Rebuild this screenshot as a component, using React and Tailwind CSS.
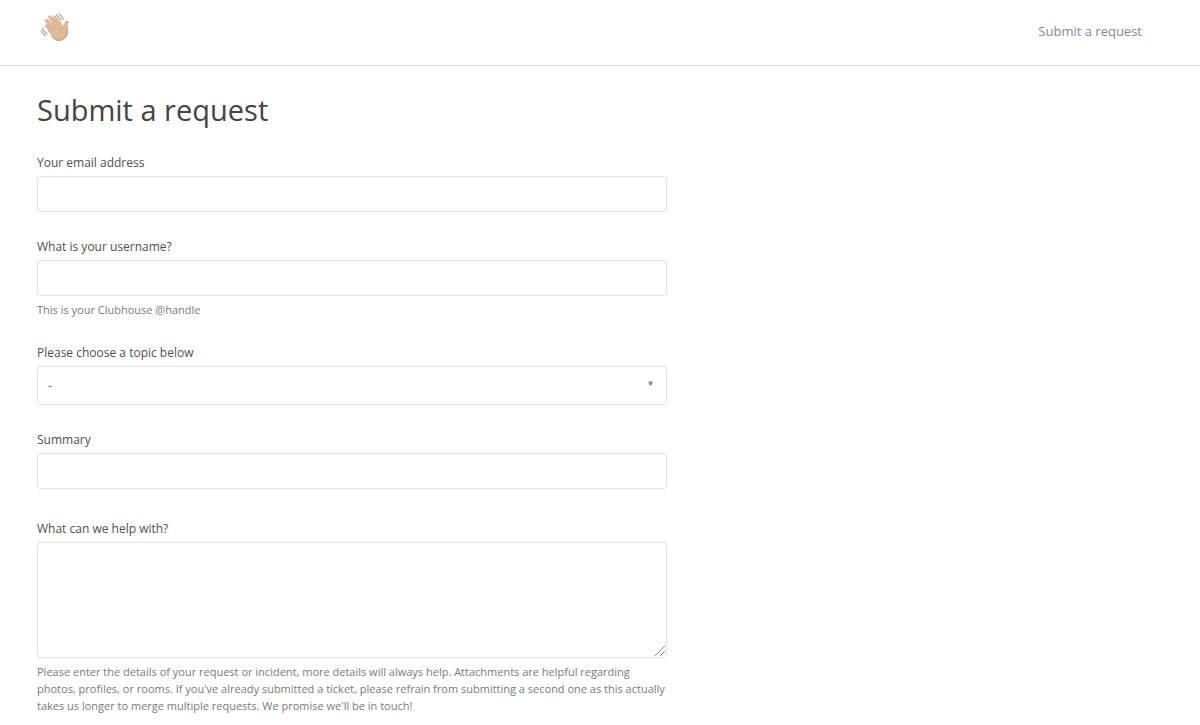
import { useState } from "react";

const hintClass = "mt-[5px] text-[11px] leading-[17px] text-[#7a7a7a]";
const inputClass =
  "block w-full h-9 px-2.5 rounded-[3px] border border-[#e3e3e3] bg-white text-[13px] text-[#555] outline-none focus:border-[#8aa4b8]";

function WavingHand() {
  return (
    <svg className="w-8 h-8" viewBox="0 0 32 32" aria-hidden="true">
      {/* Palm, thumb and fingers */}
      <g stroke="#e0bb99" strokeLinecap="round" fill="none">
        <path d="M7.6 13.8 L15 22" strokeWidth="3.6" />
        <path d="M7.6 8.8 L17 19" strokeWidth="3.8" />
        <path d="M11 5.2 L20 16" strokeWidth="3.8" />
        <path d="M15.6 5 L22 13" strokeWidth="3.4" />
        <path d="M27.4 11 L26.6 18" strokeWidth="3.4" />
      </g>
      <path
        d="M10 17 L13 11 L20 9.5 L23.4 14.6 Q25 12.6 25.6 11 L29 11 Q28.6 14 29 18 Q29.3 22.5 26.4 25.6 Q22.8 29.2 18.4 28.6 Q15.4 27.6 13.2 24.6 L8.6 18.4 Z"
        fill="#e0bb99"
      />
      <g stroke="#cda685" strokeWidth="0.7" strokeLinecap="round" fill="none">
        <path d="M9.6 8.4 L16 15.4" />
        <path d="M13.6 5.8 L19 12.2" />
        <path d="M8.6 12.6 L13.4 17.6" />
        <path d="M23.4 14.8 Q20.4 17.4 21.6 21" />
      </g>
      <path
        d="M13 24.4 Q17.4 30 23 27.6 Q28.6 24.8 28.6 17"
        stroke="#c59f80"
        strokeWidth="1.2"
        strokeLinecap="round"
        fill="none"
      />
      {/* Motion marks */}
      <g stroke="#a9ada9" strokeWidth="1.3" strokeLinecap="round" fill="none">
        <path d="M17.6 3 Q20.2 5 22 8.4" />
        <path d="M20.2 2 Q23 4 24.4 7.4" />
        <path d="M3.6 16.4 Q5 19.8 8.2 22" />
        <path d="M2 18.6 Q3.4 21.6 6.4 23.6" />
        <path d="M26.4 10 L29.4 10.2" />
      </g>
    </svg>
  );
}

function Field({ id, label, hint, className = "mb-[25px]", children }) {
  return (
    <div className={className}>
      <label htmlFor={id} className="block mb-[3px] text-[12px] leading-5 text-[#505050]">
        {label}
      </label>
      {children}
      {hint && (
        <p id={`${id}-hint`} className={hintClass}>
          {hint}
        </p>
      )}
    </div>
  );
}

export default function App() {
  const [topic, setTopic] = useState("");

  return (
    <div className="min-h-screen bg-white font-['Open_Sans',sans-serif]">
      {/* Header */}
      <header className="border-b border-[#dddddd]">
        <div className="flex items-start justify-between h-[65px] pl-[39px] pr-[58px]">
          <a href="#" aria-label="Home" className="mt-3">
            <WavingHand />
          </a>
          <a href="#request" className="mt-[21px] text-[13px] leading-5 text-[#828a90]">
            Submit a request
          </a>
        </div>
      </header>

      {/* Request form */}
      <main id="request" className="px-[37px] pt-6">
        <h1 className="mb-[23px] text-[29px] leading-10 font-normal text-[#444]">
          Submit a request
        </h1>

        <form className="w-full max-w-[630px]" onSubmit={(e) => e.preventDefault()}>
          <Field id="email" label="Your email address">
            <input id="email" type="email" className={inputClass} />
          </Field>

          <Field
            id="username"
            label="What is your username?"
            hint="This is your Clubhouse @handle"
          >
            <input
              id="username"
              type="text"
              aria-describedby="username-hint"
              className={inputClass}
            />
          </Field>

          <Field id="topic" label="Please choose a topic below">
            <div className="relative">
              <select
                id="topic"
                value={topic}
                onChange={(e) => setTopic(e.target.value)}
                className="block w-full h-[39px] px-2.5 appearance-none rounded-[3px] border border-[#e3e3e3] bg-white text-[13px] text-[#777] outline-none"
              >
                <option value="">-</option>
              </select>
              <svg
                className="absolute right-3.5 top-[15px] w-[5px] h-[5px] pointer-events-none"
                viewBox="0 0 5 5"
                aria-hidden="true"
              >
                <path d="M0 0.5 H5 L3.2 4.5 H1.8 Z" fill="#8c8c8c" />
              </svg>
            </div>
          </Field>

          <Field id="summary" label="Summary" className="mb-[30px]">
            <input id="summary" type="text" className={inputClass} />
          </Field>

          <Field
            id="description"
            label="What can we help with?"
            hint="Please enter the details of your request or incident, more details will always help. Attachments are helpful regarding photos, profiles, or rooms. If you've already submitted a ticket, please refrain from submitting a second one as this actually takes us longer to merge multiple requests. We promise we'll be in touch!"
            className=""
          >
            <div className="relative">
              <textarea
                id="description"
                aria-describedby="description-hint"
                className="block w-full h-[116px] p-2.5 resize-y rounded-[3px] border border-[#e3e3e3] bg-white text-[13px] text-[#555] outline-none"
              />
              {/* Resize grip, drawn over the native one */}
              <svg
                className="absolute right-px bottom-px w-3 h-3 bg-white pointer-events-none"
                viewBox="0 0 12 12"
                aria-hidden="true"
              >
                <path d="M1 11 L11 1 M6 11 L11 6" stroke="#8c8c8c" strokeWidth="1" fill="none" />
              </svg>
            </div>
          </Field>
        </form>
      </main>
    </div>
  );
}
